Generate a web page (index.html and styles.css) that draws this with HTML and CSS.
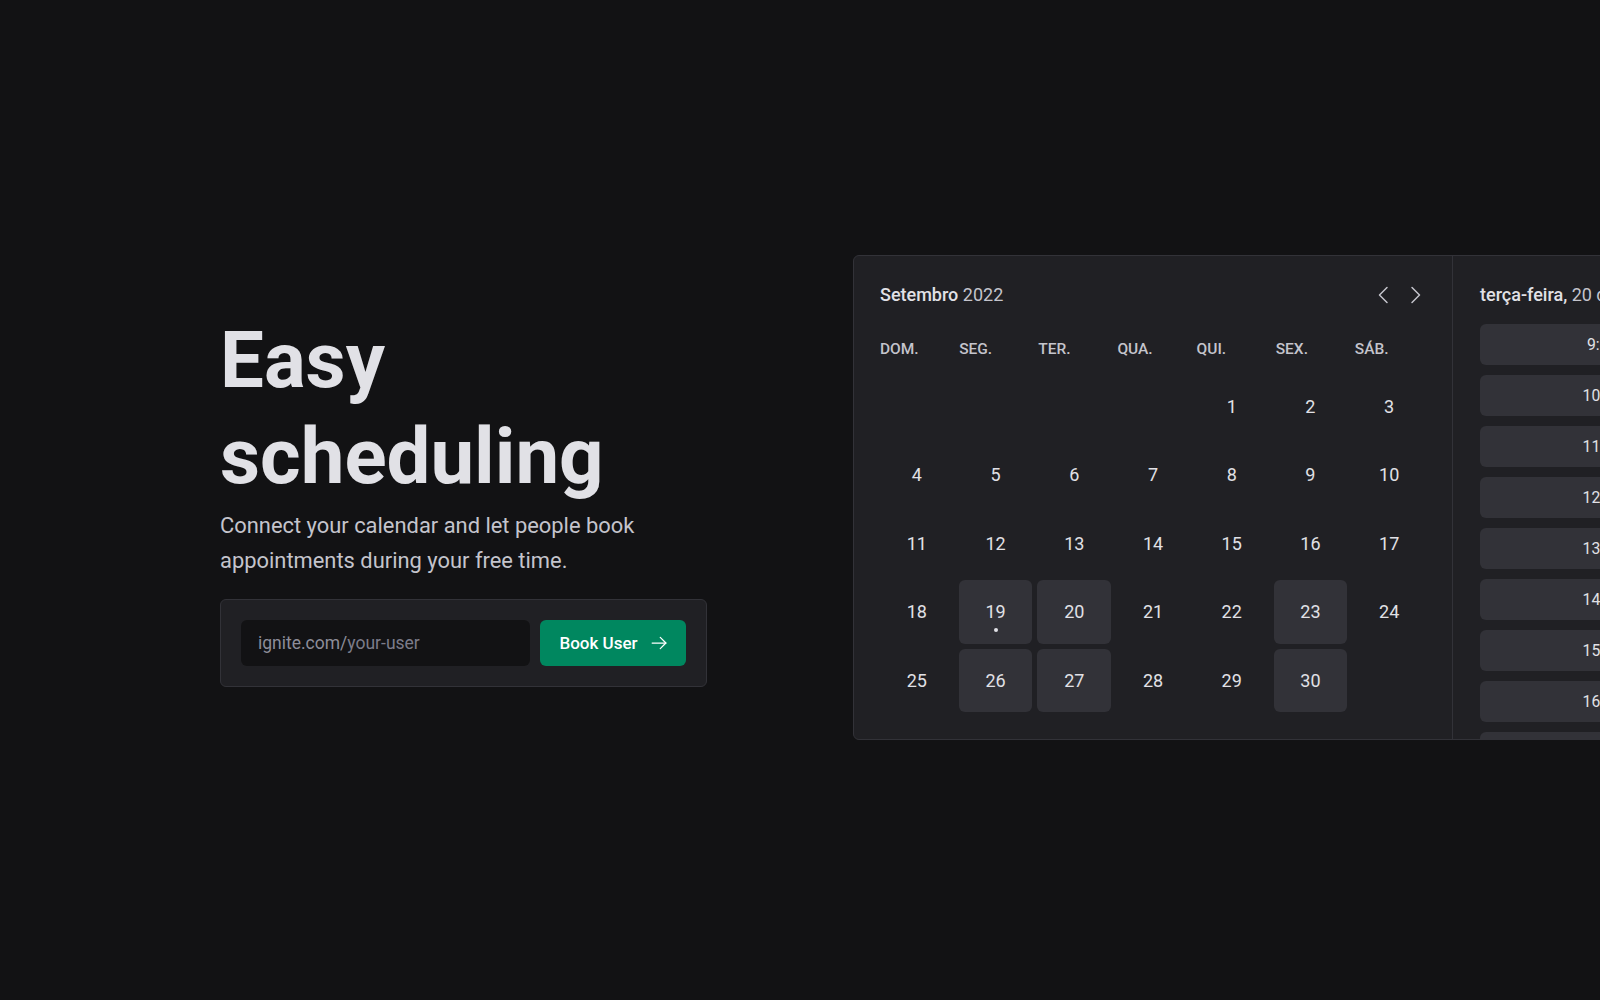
FILE: index.html
```html
<!DOCTYPE html>
<html lang="pt-BR">
<head>
<meta charset="utf-8">
<title>Ignite Call</title>
<link rel="stylesheet" href="styles.css">
</head>
<body>
<main class="page">
  <section class="hero">
    <h1 class="hero-title">Easy scheduling</h1>
    <p class="hero-text">Connect your calendar and let people book appointments during your free time.</p>
    <form class="claim-form">
      <label class="text-input">
        <span class="prefix">ignite.com/</span>
        <input class="input-field" type="text" placeholder="your-user">
      </label>
      <button class="book-btn" type="button">Book User
        <svg class="arrow" viewBox="0 0 256 256" width="20" height="20"><line x1="40" y1="128" x2="216" y2="128" fill="none" stroke="currentColor" stroke-width="16" stroke-linecap="round" stroke-linejoin="round"/><polyline points="144 56 216 128 144 200" fill="none" stroke="currentColor" stroke-width="16" stroke-linecap="round" stroke-linejoin="round"/></svg>
      </button>
    </form>
  </section>

  <div class="scheduler">
    <div class="calendar">
      <div class="cal-header">
        <p class="cal-title">Setembro <span class="cal-year">2022</span></p>
        <div class="cal-actions">
          <button class="cal-nav" type="button"><svg viewBox="0 0 256 256" width="24" height="24"><polyline points="160 208 80 128 160 48" fill="none" stroke="currentColor" stroke-width="16" stroke-linecap="round" stroke-linejoin="round"/></svg></button>
          <button class="cal-nav" type="button"><svg viewBox="0 0 256 256" width="24" height="24"><polyline points="96 48 176 128 96 208" fill="none" stroke="currentColor" stroke-width="16" stroke-linecap="round" stroke-linejoin="round"/></svg></button>
        </div>
      </div>
      <div class="cal-weekdays">
        <span>DOM.</span><span>SEG.</span><span>TER.</span><span>QUA.</span><span>QUI.</span><span>SEX.</span><span>SÁB.</span>
      </div>
      <div class="cal-days">
        <span class="day"></span><span class="day"></span><span class="day"></span><span class="day"></span>
        <span class="day">1</span><span class="day">2</span><span class="day">3</span>
        <span class="day">4</span><span class="day">5</span><span class="day">6</span><span class="day">7</span><span class="day">8</span><span class="day">9</span><span class="day">10</span>
        <span class="day">11</span><span class="day">12</span><span class="day">13</span><span class="day">14</span><span class="day">15</span><span class="day">16</span><span class="day">17</span>
        <span class="day">18</span><span class="day available today">19</span><span class="day available">20</span><span class="day">21</span><span class="day">22</span><span class="day available">23</span><span class="day">24</span>
        <span class="day">25</span><span class="day available">26</span><span class="day available">27</span><span class="day">28</span><span class="day">29</span><span class="day available">30</span><span class="day"></span>
      </div>
    </div>
    <div class="time-picker">
      <p class="tp-header">terça-feira, <span class="tp-date">20 de setembro</span></p>
      <div class="tp-list">
        <button class="tp-item" type="button">9:00h</button>
        <button class="tp-item" type="button">10:00h</button>
        <button class="tp-item" type="button">11:00h</button>
        <button class="tp-item" type="button">12:00h</button>
        <button class="tp-item" type="button">13:00h</button>
        <button class="tp-item" type="button">14:00h</button>
        <button class="tp-item" type="button">15:00h</button>
        <button class="tp-item" type="button">16:00h</button>
        <button class="tp-item" type="button">17:00h</button>
        <button class="tp-item" type="button">18:00h</button>
      </div>
    </div>
  </div>
</main>
</body>
</html>
```

FILE: styles.css
```css
* { box-sizing: border-box; }

html, body {
  margin: 0;
  padding: 0;
  background: #121214;
  overflow: hidden;
}

body {
  font-family: Roboto, "Liberation Sans", sans-serif;
  color: #e1e1e6;
  -webkit-font-smoothing: antialiased;
}

.page {
  display: flex;
  align-items: center;
  gap: 146px;
  height: 100vh;
  width: 1600px;
  padding-left: 220px;
  overflow: hidden;
}

.hero {
  width: 487px;
  flex-shrink: 0;
}

.hero-title {
  margin: 0;
  font-size: 78px;
  line-height: 96px;
  font-weight: 700;
  color: #e1e1e6;
}

.hero-text {
  margin: 3px 0 0;
  font-size: 21.9px;
  line-height: 35px;
  color: #c4c4cc;
}

.claim-form {
  margin-top: 21px;
  display: flex;
  gap: 10px;
  padding: 20px;
  background: #202024;
  border: 1px solid #323238;
  border-radius: 6px;
}

.text-input {
  flex: 1;
  min-width: 0;
  display: flex;
  align-items: center;
  height: 46px;
  padding: 0 17px;
  background: #121214;
  border-radius: 6px;
  font-size: 17.5px;
}

.prefix {
  color: #8d8d99;
}

.input-field {
  flex: 1;
  width: 0;
  min-width: 0;
  border: 0;
  padding: 0;
  background: transparent;
  font-family: inherit;
  font-size: inherit;
  color: #e1e1e6;
  outline: none;
}

.input-field::placeholder {
  color: #7c7c8a;
}

.book-btn {
  flex-shrink: 0;
  display: flex;
  align-items: center;
  justify-content: center;
  gap: 11px;
  width: 146px;
  height: 46px;
  padding: 0 0 0 2px;
  border: 0;
  border-radius: 6px;
  background: #00875f;
  color: #ffffff;
  font-family: inherit;
  font-size: 17px;
  font-weight: 500;
  white-space: nowrap;
}

.arrow { display: block; }

.scheduler {
  flex-shrink: 0;
  display: flex;
  margin-bottom: 5px;
  background: #202024;
  border: 1px solid #323238;
  border-radius: 6px;
}

.calendar {
  width: 598px;
  padding: 27px 26px 27px 26px;
}

.cal-header {
  display: flex;
  align-items: center;
  justify-content: space-between;
  height: 24px;
}

.cal-title {
  margin: 0;
  font-size: 18px;
  line-height: 24px;
  font-weight: 500;
  color: #e1e1e6;
}

.cal-year {
  font-weight: 400;
  color: #c4c4cc;
}

.cal-actions {
  display: flex;
  gap: 7px;
  margin-right: -1px;
}

.cal-nav {
  display: block;
  padding: 0;
  border: 0;
  background: none;
  color: #c4c4cc;
  line-height: 0;
}

.cal-nav svg { display: block; }

.cal-weekdays {
  display: grid;
  grid-template-columns: repeat(7, 1fr);
  gap: 5px;
  margin-top: 29.5px;
  margin-right: -3px;
  font-size: 15.5px;
  line-height: 25px;
  font-weight: 500;
  color: #c4c4cc;
}

.cal-days {
  display: grid;
  grid-template-columns: repeat(7, 1fr);
  grid-auto-rows: 63.5px;
  gap: 5px;
  margin-top: 13px;
}

.day {
  position: relative;
  display: flex;
  align-items: center;
  justify-content: center;
  border-radius: 6px;
  font-size: 18px;
  color: #e1e1e6;
}

.day.available {
  background: #323238;
}

.day.today::after {
  content: "";
  position: absolute;
  left: 50%;
  top: 50%;
  width: 4px;
  height: 4px;
  margin: 16px 0 0 -2px;
  border-radius: 50%;
  background: #e1e1e6;
}

.time-picker {
  contain: size;
  width: 308px;
  overflow: hidden;
  padding: 27px 27px 0;
  border-left: 1px solid #323238;
}

.tp-header {
  margin: 0;
  font-size: 18px;
  line-height: 24px;
  font-weight: 500;
  color: #e1e1e6;
  white-space: nowrap;
}

.tp-date {
  font-weight: 400;
  color: #c4c4cc;
}

.tp-list {
  display: flex;
  flex-direction: column;
  gap: 10px;
  margin-top: 17px;
}

.tp-item {
  height: 41px;
  border: 0;
  border-radius: 6px;
  background: #323238;
  color: #e1e1e6;
  font-family: inherit;
  font-size: 15.75px;
}
```
